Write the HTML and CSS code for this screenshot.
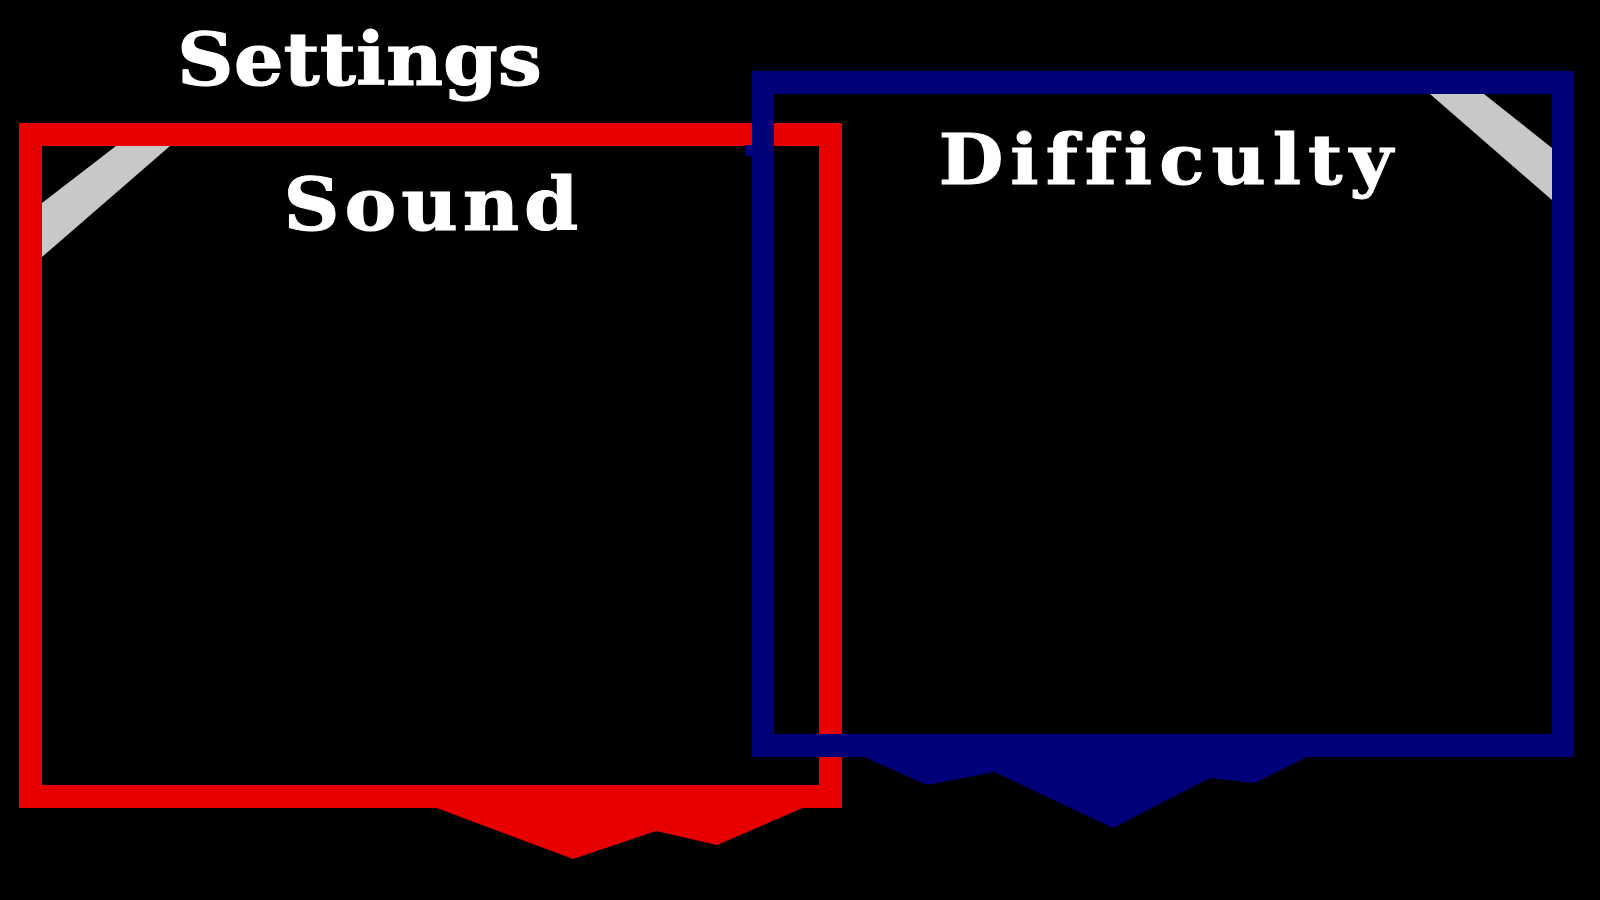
FILE: index.html
```html
<!DOCTYPE html>
<html lang="en">
<head>
<meta charset="utf-8">
<title>Settings</title>
<link rel="stylesheet" href="styles.css">
</head>
<body>
<main class="stage">
  <h1 class="page-title">Settings</h1>

  <section class="window window-sound">
    <div class="frame frame-red">
      <span class="corner corner-left"></span>
      <h2 class="window-title title-sound">Sound</h2>
    </div>
    <svg class="pennant" width="823" height="52" viewBox="0 0 823 52" aria-hidden="true">
      <polygon points="415,-1 554,51 637,23 698,37 786,-1" fill="#e80000"/>
    </svg>
  </section>

  <section class="window window-difficulty">
    <span class="stub"></span>
    <div class="frame frame-blue">
      <span class="corner corner-right"></span>
      <h2 class="window-title title-difficulty">Difficulty</h2>
    </div>
    <svg class="pennant" width="822" height="72" viewBox="0 0 822 72" aria-hidden="true">
      <polygon points="110,-1 175,28 242.5,15 361,71 458,21 502.5,26 557,-1" fill="#000078"/>
    </svg>
  </section>
</main>
</body>
</html>
```

FILE: styles.css
```css
html, body {
  margin: 0;
  padding: 0;
  background: #000;
  width: 1600px;
  height: 900px;
  overflow: hidden;
}

.stage {
  position: relative;
  width: 1600px;
  height: 900px;
  font-family: "DejaVu Serif", "Liberation Serif", serif;
  color: #fff;
}

.page-title {
  width: fit-content;
  margin: 0 0 0 177px;
  padding: 14px 0 0 0;
  font-size: 73px;
  font-weight: 700;
  line-height: 90px;
  -webkit-text-stroke: 1px #fff;
  transform: scaleX(1.075);
  transform-origin: 0 50%;
}

.window {
  position: absolute;
  display: flex;
  flex-direction: column;
}

.window-sound {
  left: 19px;
  top: 123px;
  width: 823px;
}

.window-difficulty {
  left: 752px;
  top: 71px;
  width: 822px;
}

.frame {
  position: relative;
  box-sizing: border-box;
  border-style: solid;
}

.frame-red {
  height: 685px;
  border-width: 23px;
  border-color: #e80000;
}

.frame-blue {
  height: 686px;
  border-width: 23px 22px;
  border-color: #000078;
}

.window-title {
  position: relative;
  width: fit-content;
  margin: 0 auto;
  font-weight: 700;
  line-height: 90px;
  -webkit-text-stroke: 1px #fff;
}

.title-sound {
  padding-top: 14px;
  font-size: 72px;
  letter-spacing: 4.5px;
  text-indent: 4.5px;
  transform: translateX(1px) scaleX(1.08);
}

.title-difficulty {
  padding-top: 21px;
  font-size: 69px;
  letter-spacing: 6.5px;
  text-indent: 6.5px;
  transform: translateX(3px) scaleX(1.08);
}

.corner {
  position: absolute;
  top: 0;
  background: #c8c8c8;
}

.corner-left {
  left: 0;
  width: 128px;
  height: 111px;
  clip-path: polygon(74px 0, 128px 0, 0 111px, 0 57px);
}

.corner-right {
  right: 0;
  width: 122px;
  height: 106px;
  clip-path: polygon(0 0, 54px 0, 122px 54px, 122px 106px);
}

.pennant {
  display: block;
  overflow: visible;
}

.stub {
  position: absolute;
  left: -7px;
  top: 74px;
  width: 8px;
  height: 11px;
  background: #000078;
}
```
